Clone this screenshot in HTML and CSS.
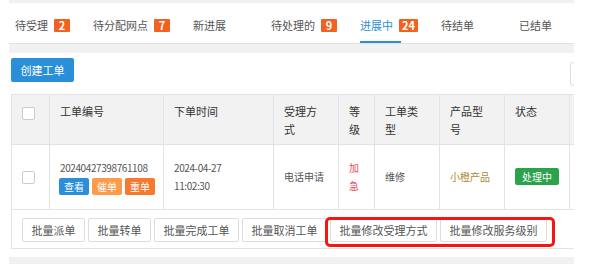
FILE: index.html
```html
<!DOCTYPE html>
<html lang="zh-CN">
<head>
  <meta charset="UTF-8">
  <title>工单管理</title>
  <meta name="viewport" content="width=device-width, initial-scale=1.0">
  <link rel="stylesheet" href="styles.css">
</head>
<body>
  <div class="page">
    <!-- 状态页签 -->
    <div class="tabs">
      <div class="tab">待受理<span class="badge">2</span></div>
      <div class="tab">待分配网点<span class="badge">7</span></div>
      <div class="tab">新进展<span class="badge empty">0</span></div>
      <div class="tab">待处理的<span class="badge">9</span></div>
      <div class="tab active">进展中<span class="badge">24</span></div>
      <div class="tab">待结单<span class="badge empty">0</span></div>
      <div class="tab">已结单</div>
    </div>

    <div class="card">
      <div class="toolbar">
        <button class="btn-primary">创建工单</button>
        <input class="search" type="text">
      </div>

      <table class="grid">
        <colgroup>
          <col style="width:38px">
          <col style="width:114px">
          <col style="width:110px">
          <col style="width:65px">
          <col style="width:36px">
          <col style="width:65px">
          <col style="width:65px">
          <col style="width:65px">
          <col>
        </colgroup>
        <thead>
          <tr>
            <th><input type="checkbox" class="check"></th>
            <th>工单编号</th>
            <th>下单时间</th>
            <th>受理方式</th>
            <th>等级</th>
            <th>工单类型</th>
            <th>产品型号</th>
            <th>状态</th>
            <th></th>
          </tr>
        </thead>
        <tbody>
          <tr>
            <td><input type="checkbox" class="check"></td>
            <td>
              <div class="num">20240427398761108</div>
              <div class="row-actions">
                <span class="tag tag-view">查看</span>
                <span class="tag tag-urge">催单</span>
                <span class="tag tag-dup">重单</span>
              </div>
            </td>
            <td class="num">2024-04-27<br>11:02:30</td>
            <td>电话申请</td>
            <td class="urgent">加急</td>
            <td>维修</td>
            <td class="product">小橙产品</td>
            <td><span class="status">处理中</span></td>
            <td></td>
          </tr>
        </tbody>
      </table>

      <div class="batch-bar">
        <button class="btn">批量派单</button>
        <button class="btn">批量转单</button>
        <button class="btn">批量完成工单</button>
        <button class="btn">批量取消工单</button>
        <button class="btn">批量修改受理方式</button>
        <button class="btn">批量修改服务级别</button>
        <div class="highlight"></div>
      </div>
    </div>
  </div>
</body>
</html>
```

FILE: styles.css
```css
* { box-sizing: border-box; }
body {
  margin: 0;
  background: #fff;
  font-family: "Noto Sans CJK SC", "Noto Sans", sans-serif;
  font-size: 11px;
  color: #555;
}
.page {
  width: 565px;
  margin-left: 9px;
  padding: 3px 0 12px;
  background: #f1f1f1;
  overflow: hidden;
}

/* tabs */
.tabs {
  display: flex;
  gap: 23px;
  height: 41px;
  padding-left: 6px;
  background: #fff;
  border-bottom: 1px solid #e2e2e2;
}
.tab {
  position: relative;
  display: flex;
  align-items: center;
  padding-top: 4px;
  color: #555;
  white-space: nowrap;
}
.tab.active { color: #2a8fd8; }
.tab.active::after {
  content: "";
  position: absolute;
  left: 0;
  bottom: 0;
  width: 41px;
  height: 2px;
  background: #2a8fd8;
}
.badge {
  display: inline-block;
  min-width: 16px;
  height: 13px;
  margin-left: 6px;
  padding: 0 3px;
  line-height: 13px;
  text-align: center;
  font-size: 11px;
  font-weight: bold;
  color: #fff;
  background: #f2611f;
  border-radius: 1px;
}
.badge.empty { visibility: hidden; }

/* main card */
.card {
  width: 720px;
  margin-top: 9px;
  padding: 5px 0 8px 2px;
  background: #fff;
}
.toolbar {
  display: flex;
  justify-content: space-between;
  align-items: flex-start;
  margin-bottom: 8px;
}
.btn-primary {
  width: 63px;
  height: 24px;
  padding: 0;
  border: none;
  border-radius: 2px;
  background: #2a8fd8;
  color: #fff;
  font-family: inherit;
  font-size: 11px;
}
.search {
  width: 159px;
  height: 24px;
  margin-top: 4px;
  border: 1px solid #ddd;
  border-radius: 3px;
}

/* table */
.grid {
  width: 100%;
  border-collapse: collapse;
  table-layout: fixed;
}
.grid th,
.grid td {
  border: 1px solid #e3e3e3;
  text-align: left;
  line-height: 18px;
}
.grid th {
  padding: 7px 12px 6px 10px;
  background: #f2f2f2;
  color: #333;
  font-weight: normal;
  font-size: 11px;
  vertical-align: top;
}
.grid td {
  padding: 14px 8px 14px 10px;
  font-size: 10px;
  vertical-align: middle;
}
.check {
  appearance: none;
  display: block;
  width: 13px;
  height: 13px;
  margin: 0;
  border: 1px solid #ccc;
  border-radius: 2px;
  background: #fff;
}
.grid th .check { margin-top: 5px; }
.num { letter-spacing: -0.4px; }
.row-actions {
  display: flex;
  gap: 3px;
  margin-top: 1px;
  margin-left: -1px;
  letter-spacing: 0;
}
.tag {
  display: inline-block;
  height: 17px;
  padding: 0 5px;
  line-height: 17px;
  color: #fff;
  border-radius: 2px;
}
.tag-view { background: #2a8fd8; }
.tag-urge { background: #fc9b4a; }
.tag-dup { background: #f57a2d; }
.urgent { color: #f5464f; }
.product { color: #ad8a32; }
.status {
  display: inline-block;
  height: 17px;
  padding: 0 7px;
  line-height: 17px;
  color: #fff;
  background: #2ca24c;
  border-radius: 2px;
}

/* batch actions */
.batch-bar {
  position: relative;
  display: flex;
  gap: 3px;
  padding: 8px 10px 6px;
  border: 1px solid #e3e3e3;
  border-top: none;
}
.btn {
  height: 24px;
  padding: 0 8.5px;
  border: 1px solid #ddd;
  border-radius: 2px;
  background: #fff;
  color: #555;
  font-family: inherit;
  font-size: 11px;
  white-space: nowrap;
}
.highlight {
  position: absolute;
  left: 313px;
  top: 7px;
  width: 230px;
  height: 30px;
  border: 3px solid #f21616;
  border-radius: 5px;
}
```
